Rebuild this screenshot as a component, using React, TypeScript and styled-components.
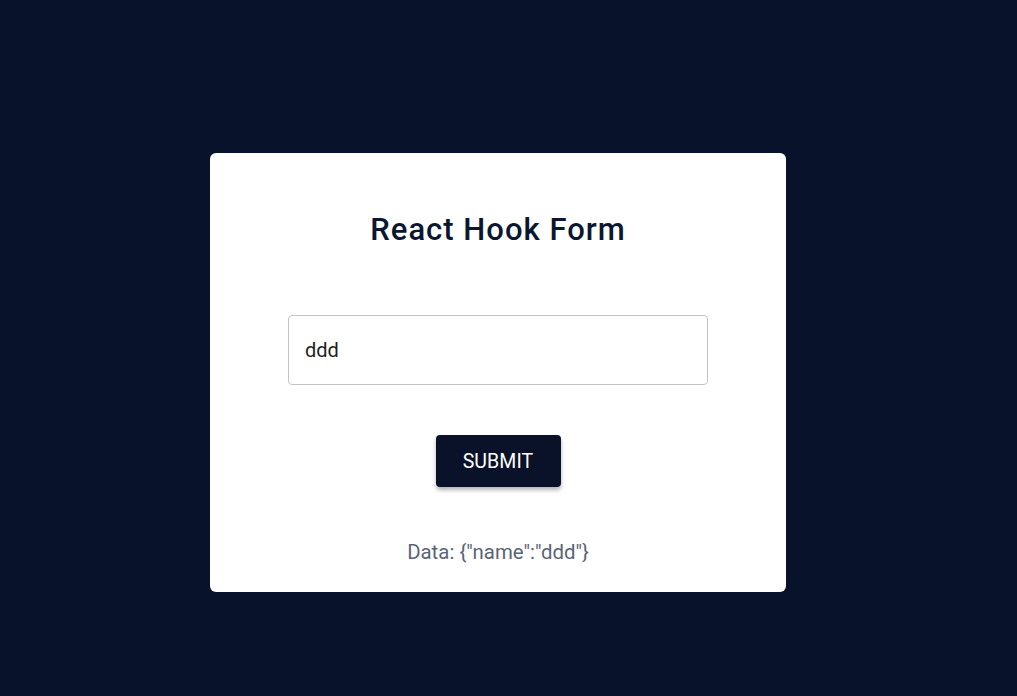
import React, { useState } from "react";
import styled, { createGlobalStyle } from "styled-components";

const GlobalStyle = createGlobalStyle`
  html, body {
    margin: 0;
    padding: 0;
    background: #08132b;
    font-family: Roboto, "Liberation Sans", sans-serif;
  }
`;

const Page = styled.div`
  min-height: 696px;
  box-sizing: border-box;
  padding: 153px 0 0 210px;
  background: #08132b;
`;

const Card = styled.form`
  width: 576px;
  height: 439px;
  box-sizing: border-box;
  background: #ffffff;
  border-radius: 6px;
  display: flex;
  flex-direction: column;
  align-items: center;
  padding-top: 57px;
`;

const Title = styled.h1`
  margin: 0;
  font-family: Roboto, sans-serif;
  font-size: 31px;
  font-weight: 500;
  line-height: 40px;
  color: #0b1730;
  letter-spacing: 1px;
`;

const Input = styled.input`
  margin-top: 65px;
  width: 420px;
  height: 70px;
  box-sizing: border-box;
  border: 1px solid #c4c4c4;
  border-radius: 4px;
  padding: 0 16px;
  font-family: Roboto, sans-serif;
  font-size: 20px;
  color: #1f1f1f;
  outline: none;
  background: #fff;
`;

const Button = styled.button`
  margin-top: 50px;
  width: 125px;
  height: 52px;
  border: none;
  border-radius: 4px;
  background: #0a1229;
  color: #ffffff;
  font-family: Roboto, sans-serif;
  font-size: 19.5px;
  font-weight: 400;
  letter-spacing: 0.1px;
  box-shadow: 0 3px 4px rgba(0, 0, 0, 0.3);
  cursor: pointer;
`;

const DataText = styled.p`
  margin: 52px 0 0;
  font-family: Roboto, sans-serif;
  font-size: 20.4px;
  line-height: 26px;
  color: #5b6376;
`;

export default function App() {
  const [value, setValue] = useState("ddd");
  const [data, setData] = useState<{ name: string }>({ name: "ddd" });
  return (
    <>
      <GlobalStyle />
      <Page>
        <Card
          onSubmit={(e) => {
            e.preventDefault();
            setData({ name: value });
          }}
        >
          <Title>React Hook Form</Title>
          <Input value={value} onChange={(e) => setValue(e.target.value)} />
          <Button type="submit">SUBMIT</Button>
          <DataText>Data: {JSON.stringify(data)}</DataText>
        </Card>
      </Page>
    </>
  );
}
